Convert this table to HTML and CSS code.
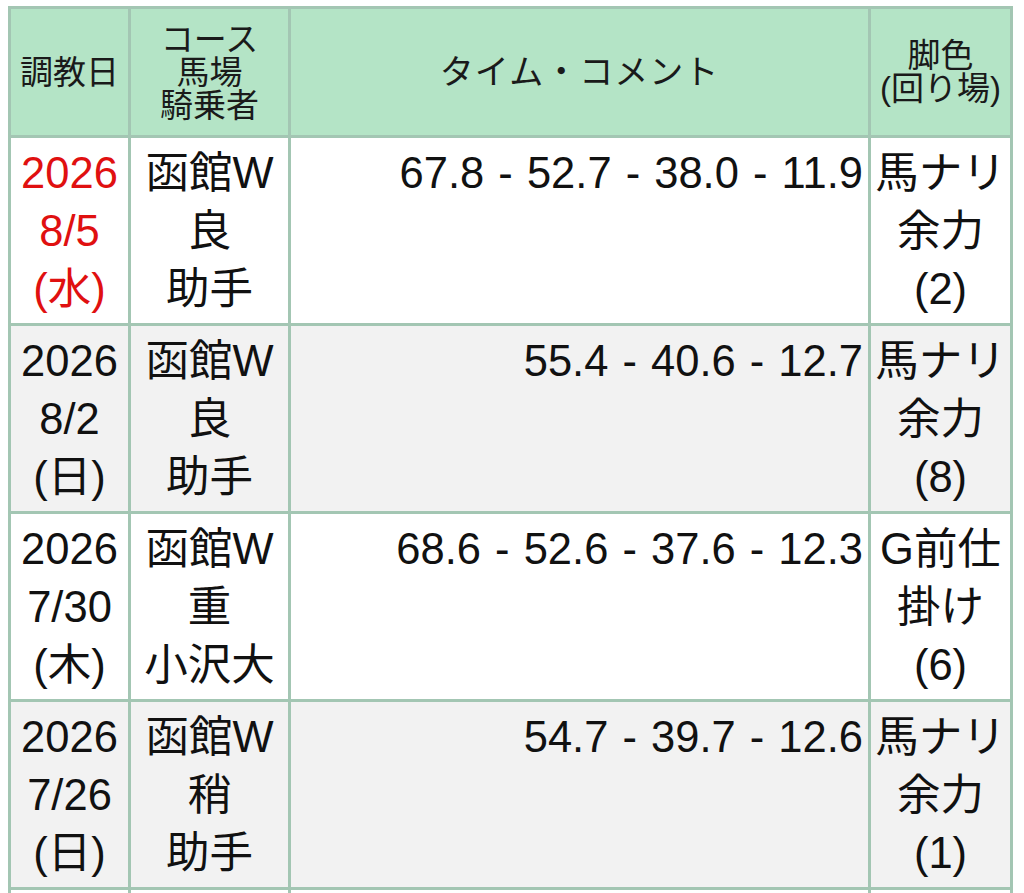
FILE: index.html
```html
<!DOCTYPE html>
<html lang="ja">
<head>
<meta charset="utf-8">
<title>調教</title>
<link rel="stylesheet" href="styles.css">
</head>
<body>
<table class="training">
  <colgroup>
    <col class="c-date">
    <col class="c-course">
    <col class="c-time">
    <col class="c-leg">
  </colgroup>
  <thead>
    <tr>
      <th>調教日</th>
      <th>コース<br>馬場<br>騎乗者</th>
      <th class="wide">タイム・コメント</th>
      <th>脚色<br>(回り場)</th>
    </tr>
  </thead>
  <tbody>
    <tr>
      <td class="date red">2026<br>8/5<br>(水)</td>
      <td class="course">函館W<br>良<br>助手</td>
      <td class="time">67.8 - 52.7 - 38.0 - 11.9</td>
      <td class="leg">馬ナリ<br>余力<br>(2)</td>
    </tr>
    <tr class="alt">
      <td class="date">2026<br>8/2<br>(日)</td>
      <td class="course">函館W<br>良<br>助手</td>
      <td class="time">55.4 - 40.6 - 12.7</td>
      <td class="leg">馬ナリ<br>余力<br>(8)</td>
    </tr>
    <tr>
      <td class="date">2026<br>7/30<br>(木)</td>
      <td class="course">函館W<br>重<br>小沢大</td>
      <td class="time">68.6 - 52.6 - 37.6 - 12.3</td>
      <td class="leg">G前仕<br>掛け<br>(6)</td>
    </tr>
    <tr class="alt">
      <td class="date">2026<br>7/26<br>(日)</td>
      <td class="course">函館W<br>稍<br>助手</td>
      <td class="time">54.7 - 39.7 - 12.6</td>
      <td class="leg">馬ナリ<br>余力<br>(1)</td>
    </tr>
    <tr class="empty">
      <td></td><td></td><td></td><td></td>
    </tr>
  </tbody>
</table>
</body>
</html>
```

FILE: styles.css
```css
html, body {
  margin: 0;
  padding: 0;
  background: #ffffff;
}

body {
  font-family: "Liberation Sans", "Noto Sans CJK JP", sans-serif;
  color: #111111;
}

.training {
  border-collapse: collapse;
  table-layout: fixed;
  width: 1005px;
  margin: 6px 0 0 8px;
}

.c-date { width: 120px; }
.c-course { width: 160px; }
.c-time { width: 580px; }
.c-leg { width: 142px; }

.training th,
.training td {
  border: 3px solid #a3c6b3;
  padding: 0;
}

.training th {
  background: #b4e4c6;
  font-weight: normal;
  font-size: 33px;
  line-height: 33px;
  height: 126px;
  text-align: center;
  vertical-align: middle;
  color: #1a1a1a;
}

.training th.wide {
  font-size: 34px;
  letter-spacing: 1px;
}

.training td {
  font-size: 43.5px;
  line-height: 58px;
  height: 188px;
  vertical-align: top;
  text-align: center;
  padding-top: 6px;
  box-sizing: border-box;
}

.training tbody tr { background: #ffffff; }
.training tbody tr.alt { background: #f2f2f2; }

.training td.time {
  text-align: right;
  padding-right: 5px;
  word-spacing: 2px;
}

.training td.red { color: #e01010; }
```
